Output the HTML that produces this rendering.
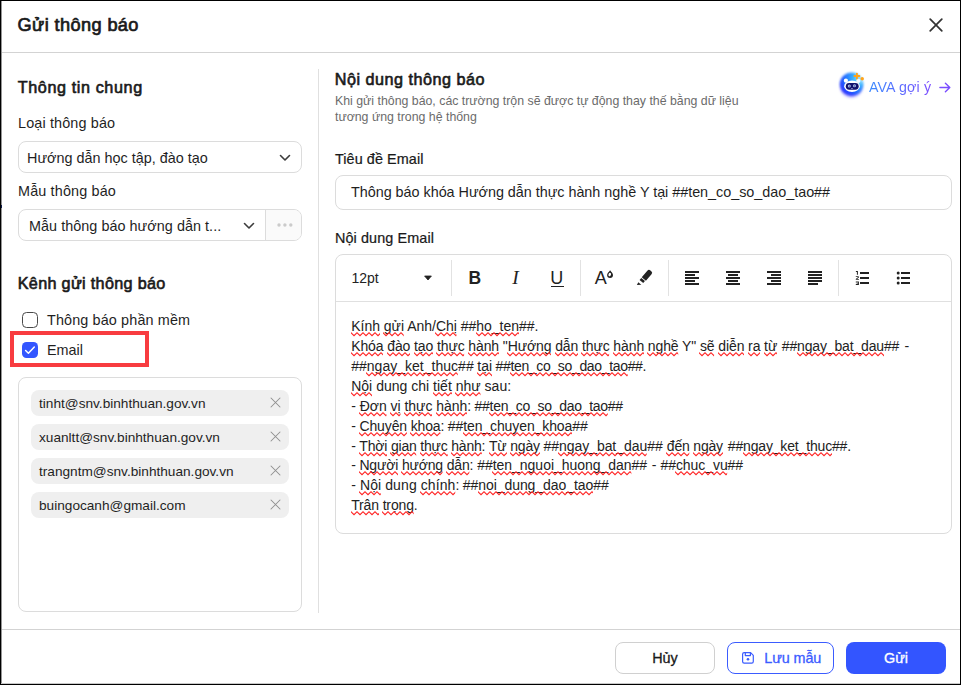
<!DOCTYPE html>
<html lang="vi">
<head>
<meta charset="utf-8">
<title>Gửi thông báo</title>
<style>
*{box-sizing:border-box;margin:0;padding:0}
html,body{width:961px;height:685px;overflow:hidden;background:#fff}
body{font-family:"Liberation Sans",sans-serif;color:#1f1f1f;position:relative;font-size:14px}
.abs{position:absolute;white-space:nowrap}
.frame{position:absolute;left:0;top:0;width:961px;height:685px;border-style:solid;border-color:#000;border-width:1px;pointer-events:none;z-index:10}
.hline{position:absolute;left:2px;right:1px;height:1px;background:#d3d3d3}
.title{left:17.6px;top:15px;font-size:18.2px;font-weight:normal;-webkit-text-stroke:0.7px #1a1a1a;line-height:20px;color:#1a1a1a}
.h2{font-size:16.2px;font-weight:normal;-webkit-text-stroke:0.62px #1a1a1a;line-height:20px;color:#1a1a1a}
.lbl{font-size:14.4px;line-height:18px;color:#1f1f1f}
.lblm{font-size:14.4px;line-height:18px;color:#1a1a1a;-webkit-text-stroke:0.22px #1a1a1a}
.box{position:absolute;border:1px solid #dcdcdc;border-radius:8px;background:#fff}
.seltxt{position:absolute;font-size:14.4px;line-height:18px;white-space:nowrap;color:#1f1f1f}
.chip{position:absolute;left:31px;width:258px;height:26px;background:#efefef;border-radius:8px}
.chip span{position:absolute;left:8px;top:6px;font-size:13.65px;line-height:16px;color:#1f1f1f;white-space:nowrap}
.chip svg{position:absolute;right:8.3px;top:7.3px}
.desc{font-size:12.33px;line-height:16px;color:#6b6b6b}
.btn{position:absolute;top:642px;height:32px;border-radius:8px;font-size:14.4px;line-height:30px;text-align:center}
.tsep{top:260px;width:1px;height:36px;background:#e2e2e2}
.ed span{position:absolute;font-size:14px;line-height:19.71px;height:19.71px;color:#222;white-space:pre}
.ed u{text-decoration:none;position:relative;display:inline-block}
.q{position:absolute;left:-0.5px;top:14.9px;width:calc(100% + 0.5px);height:5px;overflow:hidden;pointer-events:none}
</style>
</head>
<body>
<svg width="0" height="0" style="position:absolute;left:0;top:0"><defs><pattern id="zz" width="6" height="5" patternUnits="userSpaceOnUse"><path d="M-3 3.75 L0 0.85 L3 3.75 L6 0.85 L9 3.75" stroke="#ff2424" stroke-width="1.05" fill="none"/></pattern></defs></svg>
<!-- header -->
<div class="abs title" style="letter-spacing:0.38px">Gửi thông báo</div>
<svg class="abs" style="left:929.2px;top:17.8px" width="14" height="14" viewBox="0 0 14 14"><path d="M1.2 1.2 L12.8 12.8 M12.8 1.2 L1.2 12.8" stroke="#333" stroke-width="1.7" stroke-linecap="round" fill="none"/></svg>
<div class="hline" style="top:52px"></div>

<!-- left panel -->
<div class="abs h2" style="left:17.7px;top:77px;letter-spacing:0.6px">Thông tin chung</div>
<div class="abs lbl" style="left:18px;top:114px;letter-spacing:0.14px">Loại thông báo</div>
<div class="box" style="left:18px;top:141px;width:284px;height:32px"></div>
<div class="seltxt" style="left:27px;top:149px">Hướng dẫn học tập, đào tạo</div>
<svg class="abs" style="left:279px;top:154px" width="12" height="8" viewBox="0 0 12 8"><path d="M1.5 1.5 L6 6 L10.5 1.5" stroke="#3c3c3c" stroke-width="1.6" stroke-linecap="round" stroke-linejoin="round" fill="none"/></svg>

<div class="abs lbl" style="left:18px;top:182px;letter-spacing:0.15px">Mẫu thông báo</div>
<div class="box" style="left:18px;top:209px;width:284px;height:32px;overflow:hidden"><div style="position:absolute;left:246px;top:0;width:37px;height:30px;background:#fafafa;border-left:1px solid #dcdcdc"></div></div>
<div class="seltxt" style="left:29px;top:217px;letter-spacing:0.04px">Mẫu thông báo hướng dẫn t...</div>
<svg class="abs" style="left:243px;top:222px" width="12" height="8" viewBox="0 0 12 8"><path d="M1.5 1.5 L6 6 L10.5 1.5" stroke="#3c3c3c" stroke-width="1.6" stroke-linecap="round" stroke-linejoin="round" fill="none"/></svg>
<svg class="abs" style="left:276px;top:222px" width="18" height="6" viewBox="0 0 18 6"><circle cx="3" cy="3" r="1.7" fill="#cbcbcb"/><circle cx="8.9" cy="3" r="1.7" fill="#cbcbcb"/><circle cx="14.8" cy="3" r="1.7" fill="#cbcbcb"/></svg>

<div class="abs h2" style="left:17.7px;top:273px;letter-spacing:0.32px">Kênh gửi thông báo</div>
<div class="abs" style="left:22px;top:312px;width:16px;height:16px;border:1.5px solid #4a4a4a;border-radius:4.5px;background:#fff"></div>
<div class="abs lbl" style="left:47px;top:311px;letter-spacing:0.13px">Thông báo phần mềm</div>

<div class="abs" style="left:10px;top:331px;width:139px;height:36px;border:4px solid #f83c40"></div>
<div class="abs" style="left:22px;top:342px;width:16px;height:16px;border-radius:4.5px;background:#3356ff"></div>
<svg class="abs" style="left:22px;top:342px" width="16" height="16" viewBox="0 0 16 16"><path d="M3.6 8.5 L6.4 11.2 L12.3 5" stroke="#fff" stroke-width="1.5" stroke-linecap="round" stroke-linejoin="round" fill="none"/></svg>
<div class="abs lbl" style="left:47px;top:341px">Email</div>

<div class="box" style="left:18px;top:377px;width:284px;height:235px"></div>
<div class="chip" style="top:390px"><span>tinht@snv.binhthuan.gov.vn</span><svg width="11" height="11" viewBox="0 0 11 11"><path d="M1 1 L10 10 M10 1 L1 10" stroke="#8f8f8f" stroke-width="1.05" stroke-linecap="round"/></svg></div>
<div class="chip" style="top:424px"><span>xuanltt@snv.binhthuan.gov.vn</span><svg width="11" height="11" viewBox="0 0 11 11"><path d="M1 1 L10 10 M10 1 L1 10" stroke="#8f8f8f" stroke-width="1.05" stroke-linecap="round"/></svg></div>
<div class="chip" style="top:458px"><span>trangntm@snv.binhthuan.gov.vn</span><svg width="11" height="11" viewBox="0 0 11 11"><path d="M1 1 L10 10 M10 1 L1 10" stroke="#8f8f8f" stroke-width="1.05" stroke-linecap="round"/></svg></div>
<div class="chip" style="top:492px"><span>buingocanh@gmail.com</span><svg width="11" height="11" viewBox="0 0 11 11"><path d="M1 1 L10 10 M10 1 L1 10" stroke="#8f8f8f" stroke-width="1.05" stroke-linecap="round"/></svg></div>

<!-- vertical divider -->
<div class="abs" style="left:318px;top:69px;width:1px;height:544px;background:#e0e0e0"></div>

<!-- right panel -->
<div class="abs h2" style="left:334.7px;top:69px;letter-spacing:0.5px">Nội dung thông báo</div>
<div class="abs desc" style="left:335px;top:93px">Khi gửi thông báo, các trường trộn sẽ được tự động thay thế bằng dữ liệu</div>
<div class="abs desc" style="left:335px;top:109px">tương ứng trong hệ thống</div>

<div class="abs lblm" style="left:335px;top:150px;letter-spacing:0.08px">Tiêu đề Email</div>
<div class="box" style="left:335px;top:175px;width:617px;height:35px"></div>
<div class="abs" style="left:351px;top:183px;font-size:14.4px;line-height:18px;color:#1f1f1f;letter-spacing:-0.03px">Thông báo khóa Hướng dẫn thực hành nghề Y tại ##ten_co_so_dao_tao##</div>

<div class="abs lblm" style="left:335px;top:229px;letter-spacing:0.1px">Nội dung Email</div>
<div class="box" style="left:335px;top:254px;width:617px;height:280px"></div>
<div class="abs" style="left:336px;top:301px;width:615px;height:1px;background:#e0e0e0"></div>

<!-- AVA link -->
<svg class="abs" style="left:835px;top:68px" width="34" height="34" viewBox="0 0 34 34">
<defs>
<filter id="bl" x="-30%" y="-30%" width="160%" height="160%"><feGaussianBlur stdDeviation="0.9"/></filter>
<filter id="bl2" x="-50%" y="-50%" width="200%" height="200%"><feGaussianBlur stdDeviation="1.6"/></filter>
<radialGradient id="cg" cx="0.7" cy="0.22" r="0.9" fx="0.9" fy="0.3"><stop offset="0" stop-color="#b4ebff"/><stop offset="0.3" stop-color="#3ab6ff"/><stop offset="0.62" stop-color="#2270ff"/><stop offset="1" stop-color="#2a1aff"/></radialGradient>
</defs>
<ellipse cx="16.4" cy="19" rx="11" ry="10.5" fill="#5a4dff" opacity="0.45" filter="url(#bl2)"/>
<circle cx="16.6" cy="16.1" r="11.7" fill="url(#cg)" filter="url(#bl)"/>
<circle cx="10.9" cy="12.7" r="2.1" fill="#fff"/><circle cx="23.3" cy="12.9" r="2.1" fill="#f4fbff"/>
<ellipse cx="17" cy="18.2" rx="7.9" ry="5.7" fill="#fff"/>
<rect x="10.8" y="14.9" width="12.9" height="6.8" rx="3.4" fill="#12126c"/>
<circle cx="14.3" cy="18" r="1.5" fill="#aebfe6"/><circle cx="19.5" cy="17.8" r="1.5" fill="#aebfe6"/>
<circle cx="14.4" cy="18.1" r="0.6" fill="#3a4a9a"/><circle cx="19.6" cy="17.9" r="0.6" fill="#3a4a9a"/>
<rect x="16.1" y="20.3" width="1.7" height="0.8" rx="0.4" fill="#c9d3f2"/>
<path d="M21.9 5.6 V10.5 M19.45 8.05 H24.35" stroke="#ffa31a" stroke-width="1.9" stroke-linecap="round"/>
<circle cx="27.2" cy="10.8" r="1.75" fill="#ffa31a"/>
</svg>
<div class="abs" style="left:869px;top:78px;font-size:14.2px;letter-spacing:0.15px;line-height:18px;background:linear-gradient(90deg,#3a8bff 0%,#6a5cff 75%,#7c4dff 100%);-webkit-background-clip:text;background-clip:text;color:transparent;-webkit-text-fill-color:transparent">AVA gợi ý</div>
<svg class="abs" style="left:938px;top:82px" width="13" height="11" viewBox="0 0 13 11"><path d="M1.9 5.5 H11.6 M7.4 1.2 L11.8 5.5 L7.4 9.8" stroke="#7a4dff" stroke-width="1.4" stroke-linecap="round" stroke-linejoin="round" fill="none"/></svg>

<!-- toolbar -->
<div class="abs" style="left:351.5px;top:269px;font-size:14px;line-height:18px;color:#222">12pt</div>
<svg class="abs" style="left:423px;top:275px" width="10" height="6" viewBox="0 0 10 6"><path d="M1.6 1 H8.4 L5 5 Z" fill="#222" stroke="#222" stroke-width="0.8" stroke-linejoin="round"/></svg>
<div class="abs tsep" style="left:451px"></div>
<div class="abs" style="left:468.5px;top:267px;font-size:17.5px;line-height:22px;font-weight:bold;color:#222">B</div>
<div class="abs" style="left:512.3px;top:267.3px;font-family:'Liberation Serif',serif;font-style:italic;font-size:19.5px;line-height:22px;color:#222">I</div>
<div class="abs" style="left:550.3px;top:267.2px;font-size:18px;line-height:22px;color:#222">U</div>
<div class="abs" style="left:551px;top:286px;width:12.5px;height:1.2px;background:#222"></div>
<div class="abs tsep" style="left:580px"></div>
<div class="abs" style="left:594.8px;top:267.2px;font-size:18px;line-height:22px;color:#222">A</div>
<svg class="abs" style="left:607px;top:270px" width="7" height="9" viewBox="0 0 7 9"><path d="M3.1 0.2 C4.2 1.8 6 3.3 6 5 A2.95 2.95 0 1 1 0.1 5 C0.1 3.3 2 1.8 3.1 0.2 Z" fill="#222"/><ellipse cx="2.75" cy="4.55" rx="1.25" ry="1.75" transform="rotate(25 2.75 4.55)" fill="#fff"/></svg>
<svg class="abs" style="left:630px;top:264px" width="30" height="26" viewBox="0 0 30 26" fill="#222"><path d="M-5.4 -2.75 H3.2 Q5.4 -2.75 5.4 -0.6 V0.6 Q5.4 2.75 3.2 2.75 H-5.4 Z" transform="translate(17.35 10.95) rotate(-49.5)"/><rect x="-1.35" y="-2.4" width="2.7" height="4.8" transform="translate(12.25 16.5) rotate(-49.5)"/><path d="M6.9 21 L8.3 18.3 L11.3 20.8 Z"/></svg>
<div class="abs tsep" style="left:668px"></div>
<svg class="abs" style="left:685px;top:271px" width="14" height="14" viewBox="0 0 14 14" fill="#222" shape-rendering="crispEdges"><rect x="0" y="0" width="14" height="2"/><rect x="0" y="3" width="10" height="2"/><rect x="0" y="6" width="14" height="2"/><rect x="0" y="9" width="10" height="2"/><rect x="0" y="12" width="14" height="2"/></svg>
<svg class="abs" style="left:726px;top:271px" width="14" height="14" viewBox="0 0 14 14" fill="#222" shape-rendering="crispEdges"><rect x="0" y="0" width="14" height="2"/><rect x="2" y="3" width="10" height="2"/><rect x="0" y="6" width="14" height="2"/><rect x="2" y="9" width="10" height="2"/><rect x="0" y="12" width="14" height="2"/></svg>
<svg class="abs" style="left:767px;top:271px" width="14" height="14" viewBox="0 0 14 14" fill="#222" shape-rendering="crispEdges"><rect x="0" y="0" width="14" height="2"/><rect x="4" y="3" width="10" height="2"/><rect x="0" y="6" width="14" height="2"/><rect x="4" y="9" width="10" height="2"/><rect x="0" y="12" width="14" height="2"/></svg>
<svg class="abs" style="left:808px;top:271px" width="14" height="14" viewBox="0 0 14 14" fill="#222" shape-rendering="crispEdges"><rect x="0" y="0" width="14" height="2"/><rect x="0" y="3" width="14" height="2"/><rect x="0" y="6" width="14" height="2"/><rect x="0" y="9" width="14" height="2"/><rect x="0" y="12" width="10" height="2"/></svg>
<div class="abs tsep" style="left:838px"></div>
<svg class="abs" style="left:855px;top:270px" width="16" height="16" viewBox="0 0 16 16" fill="#222"><g shape-rendering="crispEdges"><rect x="5" y="2" width="9" height="2"/><rect x="5" y="7" width="9" height="2"/><rect x="5" y="12" width="9" height="2"/></g><path d="M0.9 1.1 H2.9 V4.8 H1.9 V2 H0.9 Z"/><path d="M0.8 6.3 H3.3 Q3.9 6.3 3.9 6.9 V7.4 L2.1 8.9 H3.9 V9.7 H0.8 V8.9 L2.9 7.3 V7.1 H0.8 Z"/><path d="M0.8 11.6 H3.9 V14.9 H0.8 V14.1 H2.9 V13.6 H1.6 V12.9 H2.9 V12.4 H0.8 Z"/></svg>
<svg class="abs" style="left:896px;top:270px" width="16" height="16" viewBox="0 0 16 16" fill="#222"><g shape-rendering="crispEdges"><rect x="5" y="2" width="9" height="2"/><rect x="5" y="7" width="9" height="2"/><rect x="5" y="12" width="9" height="2"/></g><circle cx="2.2" cy="3" r="1.5"/><circle cx="2.2" cy="8" r="1.5"/><circle cx="2.2" cy="13" r="1.5"/></svg>

<!-- editor content -->
<div class="ed">
<span style="left:351.20px;top:317.00px;letter-spacing:-0.016px"><u>Kính<svg class="q"><rect width="100%" height="5" fill="url(#zz)"/></svg></u> <u>gửi<svg class="q"><rect width="100%" height="5" fill="url(#zz)"/></svg></u> Anh/<u>Chị<svg class="q"><rect width="100%" height="5" fill="url(#zz)"/></svg></u> ##<u>ho_ten<svg class="q"><rect width="100%" height="5" fill="url(#zz)"/></svg></u>##.</span>
<span style="left:351.20px;top:337.00px;letter-spacing:-0.112px"><u>Khóa<svg class="q"><rect width="100%" height="5" fill="url(#zz)"/></svg></u> <u>đào<svg class="q"><rect width="100%" height="5" fill="url(#zz)"/></svg></u> <u>tạo<svg class="q"><rect width="100%" height="5" fill="url(#zz)"/></svg></u> <u>thực<svg class="q"><rect width="100%" height="5" fill="url(#zz)"/></svg></u> <u>hành<svg class="q"><rect width="100%" height="5" fill="url(#zz)"/></svg></u> "<u>Hướng<svg class="q"><rect width="100%" height="5" fill="url(#zz)"/></svg></u> <u>dẫn<svg class="q"><rect width="100%" height="5" fill="url(#zz)"/></svg></u> <u>thực<svg class="q"><rect width="100%" height="5" fill="url(#zz)"/></svg></u> <u>hành<svg class="q"><rect width="100%" height="5" fill="url(#zz)"/></svg></u> <u>nghề<svg class="q"><rect width="100%" height="5" fill="url(#zz)"/></svg></u> Y" <u>sẽ<svg class="q"><rect width="100%" height="5" fill="url(#zz)"/></svg></u> <u>diễn<svg class="q"><rect width="100%" height="5" fill="url(#zz)"/></svg></u> <u>ra<svg class="q"><rect width="100%" height="5" fill="url(#zz)"/></svg></u> <u>từ<svg class="q"><rect width="100%" height="5" fill="url(#zz)"/></svg></u></span>
<span style="left:781.80px;top:337.00px;letter-spacing:-0.154px">##<u>ngay_bat_dau<svg class="q"><rect width="100%" height="5" fill="url(#zz)"/></svg></u>##</span>
<span style="left:904.50px;top:337.00px;letter-spacing:0.000px">-</span>
<span style="left:351.20px;top:357.00px;letter-spacing:0.018px">##<u>ngay_ket_thuc<svg class="q"><rect width="100%" height="5" fill="url(#zz)"/></svg></u>##</span>
<span style="left:477.20px;top:357.00px;letter-spacing:0.052px"><u>tại<svg class="q"><rect width="100%" height="5" fill="url(#zz)"/></svg></u></span>
<span style="left:495.50px;top:357.00px;letter-spacing:-0.340px">##<u>ten_co_so_dao_tao<svg class="q"><rect width="100%" height="5" fill="url(#zz)"/></svg></u>##.</span>
<span style="left:351.20px;top:377.00px;letter-spacing:0.013px"><u>Nội<svg class="q"><rect width="100%" height="5" fill="url(#zz)"/></svg></u> dung chi <u>tiết<svg class="q"><rect width="100%" height="5" fill="url(#zz)"/></svg></u> <u>như<svg class="q"><rect width="100%" height="5" fill="url(#zz)"/></svg></u> sau:</span>
<span style="left:351.20px;top:397.00px;letter-spacing:-0.033px">- <u>Đơn<svg class="q"><rect width="100%" height="5" fill="url(#zz)"/></svg></u> <u>vị<svg class="q"><rect width="100%" height="5" fill="url(#zz)"/></svg></u> <u>thực<svg class="q"><rect width="100%" height="5" fill="url(#zz)"/></svg></u> <u>hành<svg class="q"><rect width="100%" height="5" fill="url(#zz)"/></svg></u>:</span>
<span style="left:474.50px;top:397.00px;letter-spacing:-0.278px">##<u>ten_co_so_dao_tao<svg class="q"><rect width="100%" height="5" fill="url(#zz)"/></svg></u>##</span>
<span style="left:351.20px;top:417.00px;letter-spacing:-0.135px">- <u>Chuyên<svg class="q"><rect width="100%" height="5" fill="url(#zz)"/></svg></u> <u>khoa<svg class="q"><rect width="100%" height="5" fill="url(#zz)"/></svg></u>:</span>
<span style="left:447.80px;top:417.00px;letter-spacing:-0.099px">##<u>ten_chuyen_khoa<svg class="q"><rect width="100%" height="5" fill="url(#zz)"/></svg></u>##</span>
<span style="left:351.20px;top:437.00px;letter-spacing:-0.199px">- <u>Thời<svg class="q"><rect width="100%" height="5" fill="url(#zz)"/></svg></u> <u>gian<svg class="q"><rect width="100%" height="5" fill="url(#zz)"/></svg></u> <u>thực<svg class="q"><rect width="100%" height="5" fill="url(#zz)"/></svg></u> <u>hành<svg class="q"><rect width="100%" height="5" fill="url(#zz)"/></svg></u>: <u>Từ<svg class="q"><rect width="100%" height="5" fill="url(#zz)"/></svg></u> <u>ngày<svg class="q"><rect width="100%" height="5" fill="url(#zz)"/></svg></u></span>
<span style="left:543.50px;top:437.00px;letter-spacing:-0.047px">##<u>ngay_bat_dau<svg class="q"><rect width="100%" height="5" fill="url(#zz)"/></svg></u>##</span>
<span style="left:666.80px;top:437.00px;letter-spacing:-0.187px"><u>đến<svg class="q"><rect width="100%" height="5" fill="url(#zz)"/></svg></u> <u>ngày<svg class="q"><rect width="100%" height="5" fill="url(#zz)"/></svg></u></span>
<span style="left:727.80px;top:437.00px;letter-spacing:-0.165px">##<u>ngay_ket_thuc<svg class="q"><rect width="100%" height="5" fill="url(#zz)"/></svg></u>##.</span>
<span style="left:351.20px;top:456.00px;letter-spacing:-0.168px">- <u>Người<svg class="q"><rect width="100%" height="5" fill="url(#zz)"/></svg></u> <u>hướng<svg class="q"><rect width="100%" height="5" fill="url(#zz)"/></svg></u> <u>dẫn<svg class="q"><rect width="100%" height="5" fill="url(#zz)"/></svg></u>:</span>
<span style="left:477.20px;top:456.00px;letter-spacing:-0.028px">##<u>ten_nguoi_huong_dan<svg class="q"><rect width="100%" height="5" fill="url(#zz)"/></svg></u>##</span>
<span style="left:651.80px;top:456.00px;letter-spacing:0.000px">-</span>
<span style="left:660.50px;top:456.00px;letter-spacing:-0.070px">##<u>chuc_vu<svg class="q"><rect width="100%" height="5" fill="url(#zz)"/></svg></u>##</span>
<span style="left:351.20px;top:476.00px;letter-spacing:0.098px">- <u>Nội<svg class="q"><rect width="100%" height="5" fill="url(#zz)"/></svg></u> dung <u>chính<svg class="q"><rect width="100%" height="5" fill="url(#zz)"/></svg></u>:</span>
<span style="left:462.80px;top:476.00px;letter-spacing:-0.066px">##<u>noi_dung_dao_tao<svg class="q"><rect width="100%" height="5" fill="url(#zz)"/></svg></u>##</span>
<span style="left:351.20px;top:496.00px;letter-spacing:-0.147px"><u>Trân<svg class="q"><rect width="100%" height="5" fill="url(#zz)"/></svg></u> <u>trọng<svg class="q"><rect width="100%" height="5" fill="url(#zz)"/></svg></u>.</span>
</div>

<!-- footer -->
<div class="hline" style="top:629px"></div>
<div class="btn" style="left:615px;width:100px;border:1px solid #d0d0d0;color:#1a1a1a;-webkit-text-stroke:0.3px #1a1a1a">Hủy</div>
<div class="btn" style="left:727px;width:107px;border:1.2px solid #3b5cff"></div>
<svg class="abs" style="left:741px;top:651px" width="14" height="14" viewBox="0 0 14 14" fill="none" stroke="#3b5cff" stroke-width="1.2" stroke-linejoin="round"><path d="M3.2 1.6 H9.6 L12.3 4.3 V10.6 Q12.3 12.2 10.7 12.2 H3.2 Q1.6 12.2 1.6 10.6 V3.2 Q1.6 1.6 3.2 1.6 Z"/><path d="M4.3 1.8 V4.6 H9.4 V1.8"/><circle cx="7" cy="8.2" r="1.3" fill="#3b5cff" stroke="none"/></svg>
<div class="abs" style="left:764.3px;top:649px;font-size:14.4px;line-height:18px;color:#3b5cff;letter-spacing:-0.1px;-webkit-text-stroke:0.3px #3b5cff">Lưu mẫu</div>
<div class="btn" style="left:846px;width:100px;background:#3355ff;color:#fff;line-height:32px;-webkit-text-stroke:0.3px #fff">Gửi</div>

<div class="abs" style="left:1px;top:1px;width:1px;height:683px;background:#959595;z-index:9"></div>
<div class="abs" style="left:1px;top:205px;width:1px;height:3px;background:#0c1a4a;z-index:9"></div>
<div class="abs" style="left:1px;top:683px;width:959px;height:1px;background:#c8c8c8;z-index:9"></div>
<div class="frame"></div>
</body>
</html>
